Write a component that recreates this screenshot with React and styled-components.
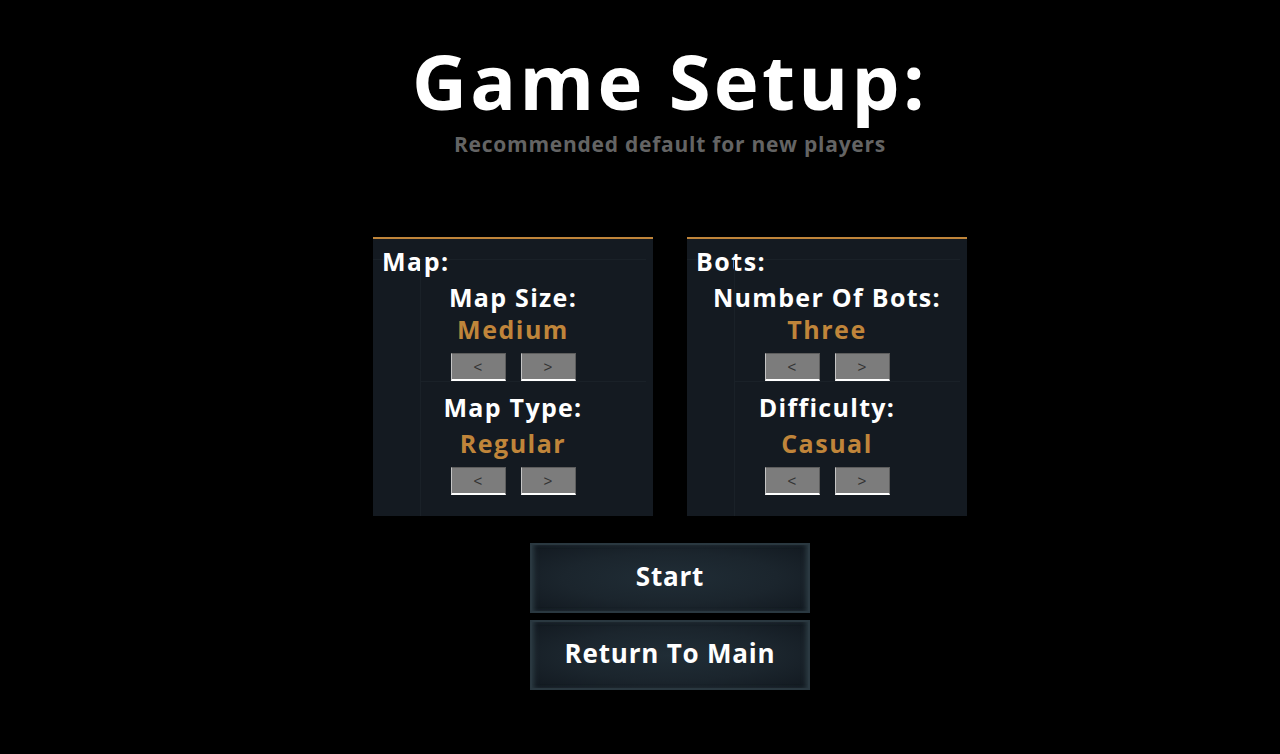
import React from "react";
import styled, { createGlobalStyle } from "styled-components";

const GlobalStyle = createGlobalStyle`
  html, body {
    margin: 0;
    height: 100%;
    background: #000;
  }
  body {
    font-family: "Open Sans", "Lato", sans-serif;
    color: #fff;
  }
`;

const Page = styled.div`
  width: 1280px;
  height: 754px;
  box-sizing: border-box;
  padding: 39px 0 0 60px;
  display: flex;
  flex-direction: column;
  align-items: center;
  overflow: hidden;
  background: #000;
`;

const Title = styled.h1`
  margin: 0;
  font-size: 76px;
  line-height: 84px;
  font-weight: 700;
  letter-spacing: 3.3px;
`;

const Subtitle = styled.h2`
  margin: 6px 0 0;
  font-size: 21px;
  line-height: 30px;
  font-weight: 700;
  letter-spacing: 0.75px;
  color: #646464;
`;

const Panels = styled.div`
  margin-top: 78px;
  display: flex;
  gap: 34px;
`;

const Panel = styled.section`
  width: 280px;
  height: 279px;
  box-sizing: border-box;
  border-top: 2px solid #c0853a;
  background: #141a21;
  display: flex;
  flex-direction: column;
`;

const PanelHead = styled.h3`
  margin: 0 7px 0 0;
  height: 20px;
  padding-left: 9px;
  font-size: 25px;
  line-height: 44px;
  font-weight: 700;
  letter-spacing: 1.5px;
  border-bottom: 1px solid #1a2128;
`;

const PanelBody = styled.div`
  flex: 1;
  margin: 0 7px 0 47px;
  border-left: 1px solid #1a2128;
  display: flex;
  flex-direction: column;
`;

const Setting = styled.div`
  height: ${(p) => (p.$first ? 122 : 134)}px;
  box-sizing: border-box;
  display: flex;
  flex-direction: column;
  align-items: center;
  padding: ${(p) => (p.$first ? 20 : 8)}px 41px 0 0;
  border-bottom: ${(p) => (p.$first ? "1px solid #1a2128" : "none")};
`;

const SettingName = styled.div`
  font-size: 25px;
  line-height: 34px;
  font-weight: 700;
  letter-spacing: 1.3px;
  white-space: nowrap;
`;

const SettingValue = styled.div`
  margin-top: ${(p) => (p.$first ? 0 : 4)}px;
  font-size: 25px;
  line-height: 30px;
  font-weight: 700;
  letter-spacing: 1.5px;
  color: #c0853a;
`;

const Arrows = styled.div`
  margin-top: 9px;
  display: flex;
  gap: 15px;
`;

const Arrow = styled.button`
  width: 55px;
  height: 28px;
  box-sizing: border-box;
  padding: 0;
  background: #7c7c7c;
  color: #333;
  font-family: "Liberation Sans", sans-serif;
  font-size: 15px;
  border-style: solid;
  border-width: 1px 1px 2px 1px;
  border-color: #5d5d5d #5d5d5d #fff #c4c4c4;
`;

const Actions = styled.div`
  margin-top: 27px;
  display: flex;
  flex-direction: column;
  gap: 7px;
`;

const ActionButton = styled.button`
  width: 280px;
  height: 70px;
  box-sizing: border-box;
  padding: 0 0 4px;
  border: 2px solid #2a3840;
  background: radial-gradient(ellipse at center, #202d36 0%, #1b252d 55%, #121920 100%);
  box-shadow: inset 4px 0 5px -2px #2c3b43, inset -4px 0 5px -2px #2c3b43;
  color: #fff;
  font-family: inherit;
  font-size: 26px;
  font-weight: 700;
  letter-spacing: 0.8px;
`;

const panels = [
  {
    name: "Map:",
    settings: [
      { name: "Map Size:", value: "Medium" },
      { name: "Map Type:", value: "Regular" },
    ],
  },
  {
    name: "Bots:",
    settings: [
      { name: "Number Of Bots:", value: "Three" },
      { name: "Difficulty:", value: "Casual" },
    ],
  },
];

export default function App() {
  return (
    <Page>
      <GlobalStyle />
      <Title>Game Setup:</Title>
      <Subtitle>Recommended default for new players</Subtitle>
      <Panels>
        {panels.map((panel) => (
          <Panel key={panel.name}>
            <PanelHead>{panel.name}</PanelHead>
            <PanelBody>
              {panel.settings.map((s, i) => (
                <Setting key={s.name} $first={i === 0}>
                  <SettingName>{s.name}</SettingName>
                  <SettingValue $first={i === 0}>{s.value}</SettingValue>
                  <Arrows>
                    <Arrow>&lt;</Arrow>
                    <Arrow>&gt;</Arrow>
                  </Arrows>
                </Setting>
              ))}
            </PanelBody>
          </Panel>
        ))}
      </Panels>
      <Actions>
        <ActionButton>Start</ActionButton>
        <ActionButton>Return To Main</ActionButton>
      </Actions>
    </Page>
  );
}
